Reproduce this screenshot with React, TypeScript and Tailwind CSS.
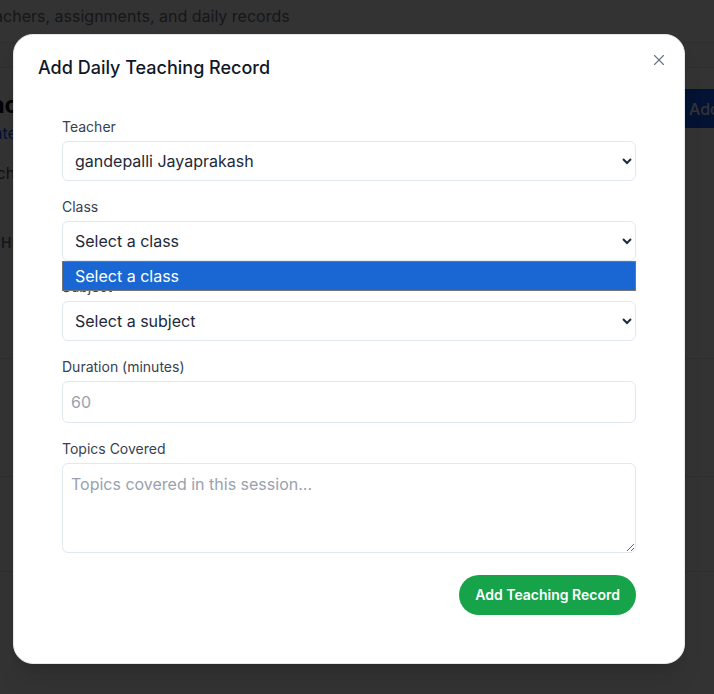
import { X } from 'lucide-react';

const fieldClass =
  'block h-10 w-full rounded-md border border-[#e2e8f0] bg-white px-2 text-base text-gray-800 outline-none';

function Field({ label, children }: { label: string; children: React.ReactNode }) {
  return (
    <div className="relative mb-4">
      <label className="mb-1 block text-sm leading-5 text-gray-700">{label}</label>
      {children}
    </div>
  );
}

function BackgroundPage() {
  return (
    <div className="absolute inset-0">
      {/* Header */}
      <div className="h-[43px] border-b border-gray-200 pt-1">
        <p className="-ml-[86px] whitespace-nowrap text-base leading-6 text-gray-500">
          Manage teachers, assignments, and daily records
        </p>
      </div>
      <div className="h-[25px] border-b border-gray-200 bg-gray-50" />

      {/* Content */}
      <div className="-ml-[38px] w-[914px] pt-[21px]">
        <div className="flex items-start justify-between">
          <div>
            <h1 className="text-2xl leading-8 font-bold text-gray-900">Teaching Management</h1>
            <p className="text-base text-blue-600">Update and track records</p>
          </div>
          <button className="mr-[7px] h-[39px] rounded-md bg-blue-600 px-4 text-base font-medium text-white">
            Add Teaching Record
          </button>
        </div>
        <p className="mt-4 text-base text-gray-600">Search classes</p>
        <p className="mt-12 text-sm font-semibold tracking-wide text-gray-500">TEACHER</p>
      </div>

      <div className="absolute inset-x-0 top-[358px] h-[215px]">
        <div className="h-[118px] border-t border-gray-200" />
        <div className="h-[96px] border-y border-gray-200" />
      </div>
    </div>
  );
}

export default function App() {
  return (
    <div className="relative h-[694px] w-full overflow-hidden bg-white font-['Inter',sans-serif]">
      <BackgroundPage />

      {/* Overlay */}
      <div className="absolute inset-0 bg-black/80" />

      {/* Modal */}
      <div className="absolute left-[13px] top-[34px] w-[672px] rounded-[20px] border border-gray-200 bg-white px-6 pb-6 shadow-xl">
        <div className="flex items-start justify-between pt-[19px]">
          <h2 className="text-lg leading-7 font-medium text-gray-900">Add Daily Teaching Record</h2>
          <button className="-mr-[8px] mt-[-3px] text-gray-500">
            <X size={18} strokeWidth={1.5} />
          </button>
        </div>

        <form className="px-6 pt-[35px] pb-6" onSubmit={(e) => e.preventDefault()}>
          <Field label="Teacher">
            <select className={fieldClass} defaultValue="gj">
              <option value="gj">gandepalli Jayaprakash</option>
            </select>
          </Field>

          <Field label="Class">
            <select className={fieldClass} defaultValue="">
              <option value="">Select a class</option>
            </select>
            {/* open native menu */}
            <div className="absolute inset-x-0 top-full z-10 flex h-[30px] items-center border border-[#767676] bg-[#1a67d4] px-3 text-base text-white">
              Select a class
            </div>
          </Field>

          <Field label="Subject">
            <select className={fieldClass} defaultValue="">
              <option value="">Select a subject</option>
            </select>
          </Field>

          <Field label="Duration (minutes)">
            <input
              type="number"
              placeholder="60"
              className="block h-[42px] w-full rounded-md border border-[#e2e8f0] bg-white px-2 text-base text-gray-800 outline-none placeholder:text-gray-400"
            />
          </Field>

          <Field label="Topics Covered">
            <textarea
              rows={3}
              placeholder="Topics covered in this session..."
              className="block h-[90px] w-full rounded-md border border-[#e2e8f0] bg-white px-2 py-2 text-base text-gray-800 outline-none placeholder:text-gray-400"
            />
          </Field>

          <div className="flex justify-end pt-[6px]">
            <button
              type="submit"
              className="h-10 rounded-full bg-[#16a34a] px-4 text-sm font-semibold text-white"
            >
              Add Teaching Record
            </button>
          </div>
        </form>
      </div>
    </div>
  );
}
